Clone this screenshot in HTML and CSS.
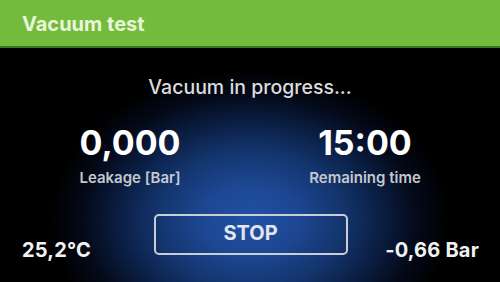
FILE: index.html
```html
<!DOCTYPE html>
<html>
<head>
<meta charset="utf-8">
<link rel="stylesheet" href="styles.css">
</head>
<body>
<div class="screen">
  <header class="topbar">
    <h1 class="title">Vacuum test</h1>
  </header>
  <main class="panel">
    <p class="status">Vacuum in progress...</p>
    <div class="stats">
      <div class="stat">
        <div class="value">0,000</div>
        <div class="label">Leakage [Bar]</div>
      </div>
      <div class="stat">
        <div class="value">15:00</div>
        <div class="label">Remaining time</div>
      </div>
    </div>
    <div class="footer">
      <div class="reading temp">25,2°C</div>
      <button class="stop">STOP</button>
      <div class="reading pressure">-0,66 Bar</div>
    </div>
  </main>
</div>
</body>
</html>
```

FILE: styles.css
```css
* { box-sizing: border-box; }
html, body {
  margin: 0;
  padding: 0;
  background: #000;
}
body {
  width: 500px;
  height: 282px;
  overflow: hidden;
  font-family: Inter, "Liberation Sans", sans-serif;
}
.screen {
  width: 500px;
  height: 282px;
  display: flex;
  flex-direction: column;
}
.topbar {
  height: 48px;
  background: #72bb3c;
  border-bottom: 2px solid #3b7420;
  display: flex;
  align-items: center;
  padding-left: 22px;
}
.title {
  margin: 0;
  font-size: 20px;
  font-weight: 700;
  color: #e8f6da;
  line-height: 1;
  padding-top: 1px;
}
.panel {
  flex: 1;
  background:
    radial-gradient(ellipse 200px 150px at 250px 172px,
      #2152a6 0%, #1c4690 25%, #143670 45%, #0b1f45 65%, #040a1a 83%, #000 100%);
  display: flex;
  flex-direction: column;
}
.status {
  margin: 29px 0 0;
  text-align: center;
  font-size: 19.5px;
  line-height: 20px;
  font-weight: 500;
  color: #dcdcdc;
}
.stats {
  display: grid;
  grid-template-columns: 220px 220px;
  column-gap: 15px;
  padding-left: 20px;
  margin-top: 27px;
}
.stat {
  display: flex;
  flex-direction: column;
  align-items: center;
}
.value {
  font-size: 34px;
  font-weight: 700;
  line-height: 38px;
  color: #fff;
}
.label {
  margin-top: 7px;
  font-size: 15px;
  font-weight: 600;
  line-height: 18px;
  color: #c4c8ce;
}
.footer {
  display: grid;
  grid-template-columns: 1fr 194px 1fr;
  padding: 0 21px 0 22px;
  margin-top: 27px;
  align-items: end;
}
.reading {
  font-size: 20px;
  font-weight: 700;
  line-height: 20px;
  letter-spacing: 0.2px;
  color: #f2f2f2;
  margin-bottom: -5px;
}
.pressure { justify-self: end; }
.stop {
  height: 41px;
  border: 2px solid #c9ced6;
  border-radius: 5px;
  background: transparent;
  color: #e2e6ee;
  font-family: inherit;
  font-size: 20px;
  font-weight: 700;
  padding: 0 0 3px;
}
```
